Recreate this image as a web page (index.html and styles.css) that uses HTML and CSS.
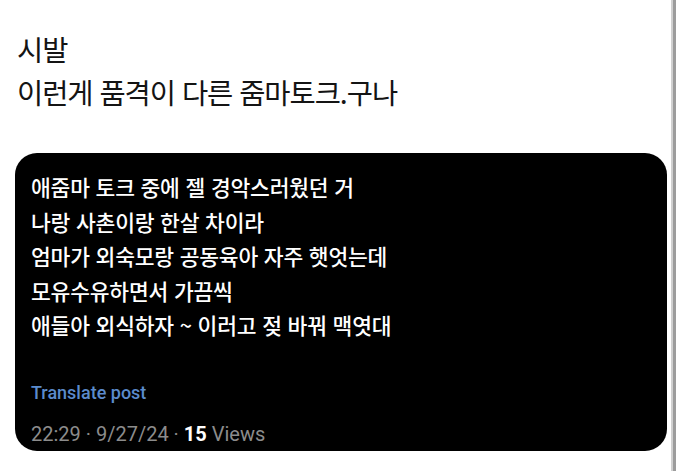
FILE: index.html
```html
<!DOCTYPE html>
<html lang="ko">
<head>
<meta charset="utf-8">
<title>post</title>
<link rel="stylesheet" href="styles.css">
</head>
<body>
<div class="page">
  <main class="content">
    <div class="heading">
      <p class="heading-line">시발</p>
      <p class="heading-line">이런게 품격이 다른 줌마토크.구나</p>
    </div>
    <section class="card">
      <div class="body">
        <p class="body-line">애줌마 토크 중에 젤 경악스러웠던 거</p>
        <p class="body-line">나랑 사촌이랑 한살 차이라</p>
        <p class="body-line">엄마가 외숙모랑 공동육아 자주 햇엇는데</p>
        <p class="body-line">모유수유하면서 가끔씩</p>
        <p class="body-line">애들아 외식하자 ~ 이러고 젖 바꿔 맥엿대</p>
      </div>
      <p class="translate">Translate post</p>
      <p class="meta">22:29 · 9/27/24 · <strong class="views">15</strong> Views</p>
    </section>
  </main>
  <div class="scrollbar"></div>
  <div class="gutter"></div>
</div>
</body>
</html>
```

FILE: styles.css
```css
html, body {
  margin: 0;
  padding: 0;
  background: #ffffff;
}

p {
  margin: 0;
}

.page {
  display: flex;
  width: 682px;
  height: 471px;
  overflow: hidden;
}

.content {
  width: 671px;
  flex: none;
  display: flex;
  flex-direction: column;
}

.heading {
  padding: 27px 0 0 17px;
  font-family: "Noto Sans CJK KR", "Noto Sans CJK SC", sans-serif;
  font-size: 28.5px;
  line-height: 43px;
  letter-spacing: -1.05px;
  color: #141414;
}

.card {
  margin: 40px 0 0 15px;
  width: 652px;
  height: 298px;
  box-sizing: border-box;
  background: #000000;
  border-radius: 22px;
  padding: 17px 16px 0 16px;
  display: flex;
  flex-direction: column;
}

.body {
  font-family: "Noto Sans CJK KR", "Noto Sans CJK SC", sans-serif;
  font-size: 21.5px;
  line-height: 34.5px;
  letter-spacing: -0.2px;
  color: #ffffff;
  font-weight: 500;
}

.translate {
  margin-top: 40px;
  font-family: Roboto, "Liberation Sans", sans-serif;
  font-size: 18px;
  line-height: 20px;
  font-weight: 500;
  color: #5b8bcc;
}

.meta {
  margin-top: 19px;
  font-family: Roboto, "Liberation Sans", sans-serif;
  font-size: 20px;
  line-height: 24px;
  color: #8c8c8c;
}

.views {
  color: #ffffff;
  font-weight: 700;
}

.scrollbar {
  width: 5px;
  flex: none;
  background: linear-gradient(to right, #d0d0d0 0, #d0d0d0 2px, #9c9c9c 2px, #9c9c9c 5px);
}

.gutter {
  flex: 1;
  background: #ffffff;
}
```
